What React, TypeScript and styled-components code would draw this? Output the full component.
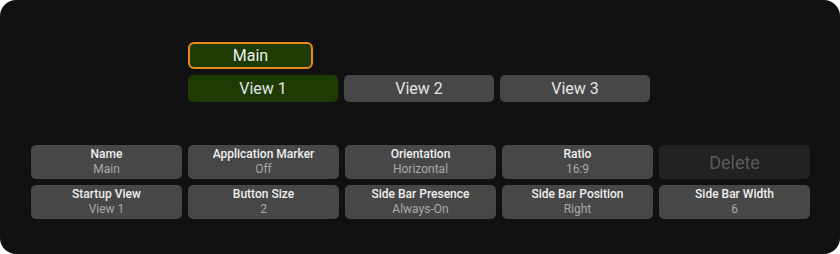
import styled, { createGlobalStyle } from "styled-components";

const Global = createGlobalStyle`
  html, body {
    margin: 0;
    background: #ffffff;
  }
  * { box-sizing: border-box; }
`;

const cells = [
  { label: "Name", value: "Main" },
  { label: "Application Marker", value: "Off" },
  { label: "Orientation", value: "Horizontal" },
  { label: "Ratio", value: "16:9" },
  null,
  { label: "Startup View", value: "View 1" },
  { label: "Button Size", value: "2" },
  { label: "Side Bar Presence", value: "Always-On" },
  { label: "Side Bar Position", value: "Right" },
  { label: "Side Bar Width", value: "6" },
];

const App = () => {
  return (
    <Panel>
      <Global />
      <TopArea>
        <MainButton>Main</MainButton>
        <ViewRow>
          <ViewButton $active>View 1</ViewButton>
          <ViewButton>View 2</ViewButton>
          <ViewButton>View 3</ViewButton>
        </ViewRow>
      </TopArea>
      <Settings>
        {cells.map((c, i) =>
          c ? (
            <Cell key={i}>
              <Label>{c.label}</Label>
              <Value>{c.value}</Value>
            </Cell>
          ) : (
            <DeleteCell key={i}>Delete</DeleteCell>
          )
        )}
      </Settings>
    </Panel>
  );
};

const Panel = styled.div`
  width: 840px;
  height: 254px;
  background: #111111;
  border-radius: 16px;
  padding: 42px 31px 0 31px;
  font-family: Roboto, "Liberation Sans", sans-serif;
  display: flex;
  flex-direction: column;
`;

const TopArea = styled.div`
  display: flex;
  flex-direction: column;
  gap: 6px;
  padding-left: 157px;
`;

const MainButton = styled.div`
  width: 125px;
  height: 27px;
  border: 2px solid #e88b1e;
  border-radius: 6px;
  background: #1d3b03;
  color: #eeeeee;
  font-size: 16px;
  display: flex;
  align-items: center;
  justify-content: center;
`;

const ViewRow = styled.div`
  display: flex;
  gap: 6px;
`;

const ViewButton = styled.div<{ $active?: boolean }>`
  width: 150px;
  height: 27px;
  border-radius: 5px;
  background: ${(p) => (p.$active ? "#1d3b03" : "#474747")};
  color: #e4e4e4;
  font-size: 16px;
  display: flex;
  align-items: center;
  justify-content: center;
`;

const Settings = styled.div`
  margin-top: 43px;
  display: grid;
  grid-template-columns: repeat(5, 151px);
  grid-auto-rows: 34px;
  gap: 6px;
`;

const Cell = styled.div`
  background: #474747;
  border-radius: 5px;
  display: flex;
  flex-direction: column;
  align-items: center;
  justify-content: center;
  line-height: 15px;
`;

const Label = styled.div`
  color: #eeeeee;
  font-size: 12px;
  font-weight: 500;
`;

const Value = styled.div`
  color: #a8a8a8;
  font-size: 12px;
`;

const DeleteCell = styled.div`
  background: #222222;
  border-radius: 5px;
  color: #5a5a5a;
  font-size: 18px;
  display: flex;
  align-items: center;
  justify-content: center;
`;

export default App;
